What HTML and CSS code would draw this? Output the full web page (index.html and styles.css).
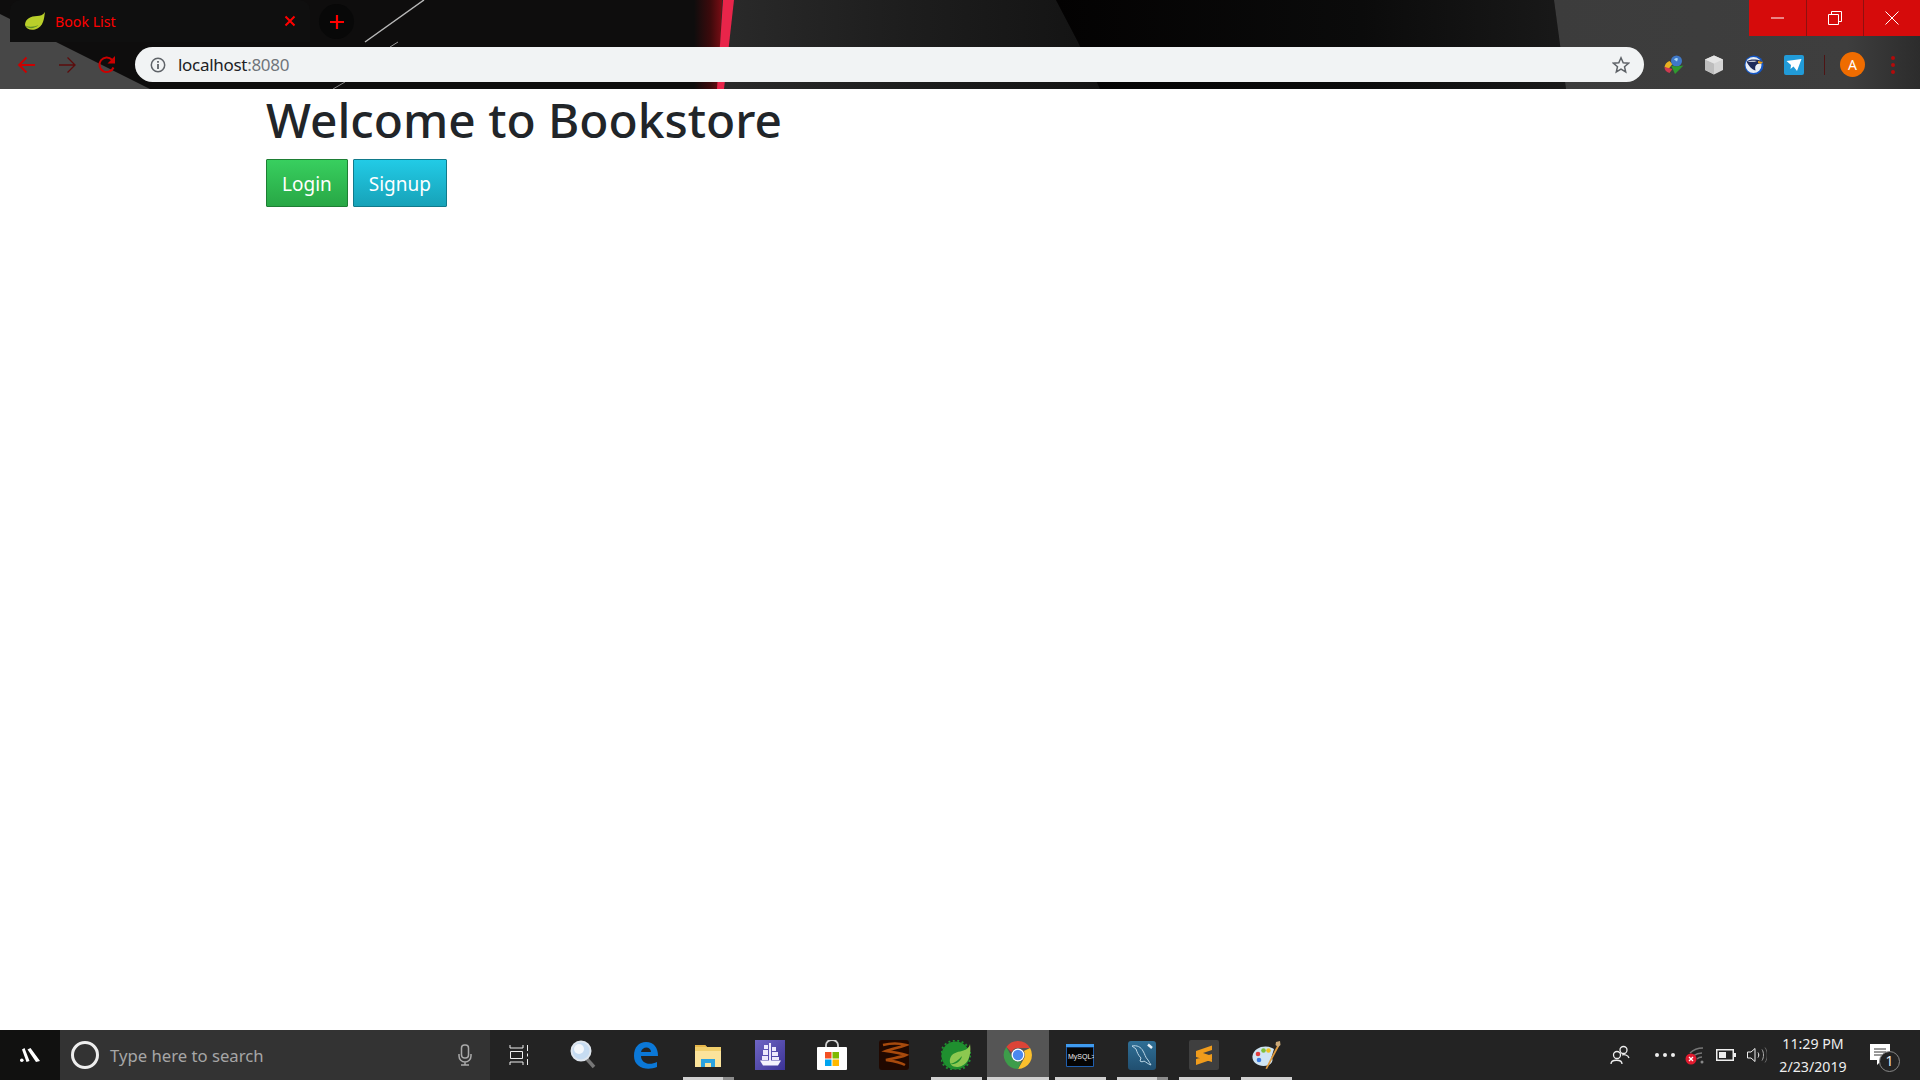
FILE: index.html
```html
<!DOCTYPE html>
<html lang="en">
<head>
    <meta charset="UTF-8">
    <meta name="viewport" content="width=device-width, initial-scale=1.0">
    <title>Book List</title>
    <link rel="stylesheet" href="styles.css">
</head>
<body>
    <header class="frame">
        <!-- browser theme wallpaper -->
        <svg class="theme" width="1920" height="89" viewBox="0 0 1920 89">
            <defs>
                <linearGradient id="glow" x1="0" x2="1" y1="0" y2="0">
                    <stop offset="0" stop-color="#0e0d0d"/>
                    <stop offset="0.6" stop-color="#3e0a0c"/>
                    <stop offset="1" stop-color="#7a0d14"/>
                </linearGradient>
                <linearGradient id="fade" x1="0" x2="1" y1="0" y2="0">
                    <stop offset="0" stop-color="#2a2a2a"/>
                    <stop offset="0.5" stop-color="#1d1d1d"/>
                    <stop offset="1" stop-color="#131313"/>
                </linearGradient>
                <linearGradient id="fade2" x1="0" x2="1" y1="0" y2="0">
                    <stop offset="0" stop-color="#030202"/>
                    <stop offset="0.6" stop-color="#0b0b0b"/>
                    <stop offset="1" stop-color="#191919"/>
                </linearGradient>
                <linearGradient id="side" x1="0" x2="1" y1="0" y2="0">
                    <stop offset="0" stop-color="#3c3c3c"/>
                    <stop offset="0.8" stop-color="#3e3e3e"/>
                    <stop offset="1" stop-color="#2c2c2c"/>
                </linearGradient>
                <linearGradient id="shipBg" x1="0" x2="1" y1="0" y2="1">
                    <stop offset="0" stop-color="#6f66c4"/>
                    <stop offset="1" stop-color="#3c3396"/>
                </linearGradient>
                <linearGradient id="dbBg" x1="0" x2="0" y1="0" y2="1">
                    <stop offset="0" stop-color="#2f6f96"/>
                    <stop offset="1" stop-color="#214f70"/>
                </linearGradient>
            </defs>
            <rect width="1920" height="89" fill="#0e0d0d"/>
            <polygon points="0,14 150,89 0,89" fill="#474747"/>
            <rect x="694" width="28" height="89" fill="url(#glow)"/>
            <polygon points="722,0 1056,0 1078,42 1100,89 718,89" fill="url(#fade)"/>
            <polygon points="1056,0 1554,0 1566,89 1100,89 1078,42" fill="url(#fade2)"/>
            <polygon points="1554,0 1920,0 1920,89 1566,89" fill="url(#side)"/>
            <polygon points="723,0 734,0 724,89 717,89" fill="#e8254a"/>
            <line x1="365" y1="42" x2="424" y2="0" stroke="#b8b8b8" stroke-width="1.5"/>
            <line x1="390" y1="47" x2="398" y2="42" stroke="#999"/>
            <line x1="333" y1="89" x2="345" y2="82" stroke="#888"/>
        </svg>

        <div class="window-controls">
            <div class="win-btn">
                <svg width="14" height="14" viewBox="0 0 14 14"><path d="M0 7h13" stroke="#fff" fill="none"/></svg>
            </div>
            <div class="win-btn">
                <svg width="14" height="14" viewBox="0 0 14 14"><path d="M.5 3.5h10v10H.5zM3.5 3.5V.5h10v10h-3" stroke="#fff" fill="none"/></svg>
            </div>
            <div class="win-btn">
                <svg width="14" height="14" viewBox="0 0 14 14"><path d="M.5.5l13 13M13.500.5l-13 13" stroke="#fff" fill="none"/></svg>
            </div>
        </div>

        <div class="tabstrip">
            <div class="tab">
                <svg class="favicon" width="22" height="20" viewBox="0 0 22 20">
                    <path d="M21 1C20 7 20 16 11 18.500 6 19.500 2 18 1 14 1 8 7 5 13 5c3 0 6-1 8-4z" fill="#b9cf2a"/>
                    <path d="M1.500 15c3 3 9 3 13-1-4 2-9 2-13 1z" fill="#5f8f2a"/>
                </svg>
                <span class="tab-title">Book List</span>
                <svg class="tab-close" width="12" height="12" viewBox="0 0 12 12"><path d="M1.500 1.500l9 9M10.500 1.500l-9 9" stroke="#f00" stroke-width="2" fill="none"/></svg>
            </div>
            <div class="new-tab">
                <svg width="16" height="16" viewBox="0 0 16 16"><path d="M8 1v14M1 8h14" stroke="#f00" stroke-width="2.200" fill="none"/></svg>
            </div>
        </div>

        <div class="toolbar">
            <div class="nav-buttons">
                <svg width="20" height="18" viewBox="0 0 20 18"><path d="M18 9H2M9.500 1.500L2 9l7.500 7.500" stroke="#cc0000" stroke-width="1.800" fill="none"/></svg>
                <svg width="20" height="18" viewBox="0 0 20 18"><path d="M2 9h16M10.500 1.500L18 9l-7.500 7.500" stroke="#5c0c0c" stroke-width="1.300" fill="none"/></svg>
                <svg width="20" height="20" viewBox="0 0 20 20"><path d="M16.500 12.500a7.300 7.300 0 1 1-1.500-7.800" stroke="#cc0000" stroke-width="2" fill="none"/><path d="M18 1v7.500h-7.500z" fill="#cc0000"/></svg>
            </div>
            <div class="omnibox">
                <svg class="info-icon" width="16" height="16" viewBox="0 0 16 16"><circle cx="8" cy="8" r="6.700" stroke="#5f6368" stroke-width="1.500" fill="none"/><path d="M7.100 7h1.800v5H7.100zM7.100 4h1.800v1.800H7.100z" fill="#5f6368"/></svg>
                <span class="url">localhost<span class="url-port">:8080</span></span>
                <svg class="star" width="18" height="18" viewBox="0 0 18 18"><path d="M9 1.800l2.200 4.900 5.300.5-4 3.500 1.200 5.200L9 13.200l-4.700 2.700 1.200-5.200-4-3.500 5.300-.5z" stroke="#5f6368" stroke-width="1.500" fill="none"/></svg>
            </div>
            <div class="extensions">
                <svg width="20" height="20" viewBox="0 0 20 20">
                    <path d="M.5 12a8 8 0 0 1 5-6l3 3-4 5z" fill="#e8b020"/>
                    <path d="M.5 12c0 3 1.500 5 5 6l3-4-4-1z" fill="#d03a50"/>
                    <circle cx="12.500" cy="6" r="5.500" fill="#3f78c8"/>
                    <path d="M10 4.500a3 3 0 0 1 4-1l-1 3z" fill="#a8d8f4"/>
                    <path d="M7 10.500l5 1 7.500-1L11 19z" fill="#2f9a2f"/>
                </svg>
                <svg width="20" height="20" viewBox="0 0 20 20">
                    <path d="M10 .5l9 4v10.500l-9 4.500-9-4.500V4.500z" fill="#d4d4d4"/>
                    <path d="M1 4.500l9 4v11l-9-4.500z" fill="#bdbdbd"/>
                    <path d="M1 4.500l9-4 9 4-9 4z" fill="#e4e4e4"/>
                </svg>
                <svg width="20" height="20" viewBox="0 0 20 20">
                    <circle cx="10" cy="10" r="9.500" fill="#1456c4"/>
                    <circle cx="9.500" cy="10" r="8" fill="#e8eef6"/>
                    <path d="M2.500 6.500c4-2.500 9-2.500 15-.5l1 2-5 1c-2 1-3 3-2 6.500-4-1-7-5-9-9z" fill="#1d2a5a"/>
                    <path d="M14 6l5 1-2 2-3-1z" fill="#e8a020"/>
                    <path d="M3 6.500c3-1 6-1 10-.5-3 1-6 1-10 .5z" fill="#f4f6fa"/>
                </svg>
                <svg width="20" height="20" viewBox="0 0 20 20">
                    <rect width="20" height="20" rx="2" fill="#219bd8"/>
                    <path d="M2.500 6l15-2-4.500 12-3.500-4.500-3 2.500.5-4z" fill="#fff"/>
                </svg>
            </div>
            <div class="toolbar-sep"></div>
            <div class="avatar">A</div>
            <div class="menu-dots"><span></span><span></span><span></span></div>
        </div>
    </header>

    <main class="page">
        <h1>Welcome to Bookstore</h1>
        <div class="actions">
            <a class="btn btn-login">Login</a>
            <a class="btn btn-signup">Signup</a>
        </div>
    </main>

    <footer class="taskbar">
        <div class="start">
            <svg width="20" height="14" viewBox="0 0 20 14"><circle cx="1.800" cy="12.200" r="1.800" fill="#fff"/><path d="M2 1.500L4.500 0l5 13-3 1zM7.500 1.500L10.500 0 20 13l-4 1z" fill="#fff"/></svg>
        </div>
        <div class="search">
            <span class="cortana"></span>
            <span class="search-text">Type here to search</span>
            <svg class="mic" width="14" height="22" viewBox="0 0 14 22"><rect x="3.500" y="1" width="7" height="13" rx="3" stroke="#aaa" stroke-width="1.500" fill="none"/><path d="M1 10v2a6 6 0 0 0 12 0v-2M7 18v3M3 21h8" stroke="#aaa" stroke-width="1.500" fill="none"/></svg>
        </div>
        <div class="apps">
            <div class="app app-taskview">
                <svg width="22" height="22" viewBox="0 0 22 22"><path d="M1 1v3h13V1M1 21v-3h13v3M1.500 7.500h12v7h-12zM18.500 1v6M18.500 9.500v3M18.500 15v6" stroke="#eee" fill="none"/></svg>
            </div>
            <div class="app">
                <svg width="30" height="30" viewBox="0 0 30 30"><path d="M17 18l8 9" stroke="#777" stroke-width="3.500"/><circle cx="12" cy="11" r="9.500" fill="#c6dcf2" stroke="#dfe6ee" stroke-width="2"/><circle cx="10" cy="9" r="5" fill="#f4f8fc"/></svg>
            </div>
            <div class="app">
                <svg width="26" height="28" viewBox="0 0 26 28"><path d="M25 15H8c0 7 8 10 16 6v5c-10 4-23 1-23-11C1 6 6 1 13 1c8 0 12 6 12 14zM8 11h10c0-6-9-6-10 0z" fill="#0b78d7"/></svg>
            </div>
            <div class="app app-open app-stacked">
                <svg width="28" height="26" viewBox="0 0 28 26"><path d="M1 3h10l2 2h14v20H1z" fill="#f1cf6c"/><path d="M1 3h10l2 2H1z" fill="#e6b64a"/><rect x="1" y="9" width="26" height="16" fill="#fbe39b"/><path d="M7 25v-8h14v8h-4v-4h-6v4z" fill="#2aa3e0"/></svg>
            </div>
            <div class="app">
                <svg width="30" height="30" viewBox="0 0 30 30">
                    <rect width="30" height="30" fill="url(#shipBg)"/>
                    <path d="M14 3h2v18h-2zM9 5h4v4H9zM8 10h5v5H8zM7 16h6v4H7zM17 7h4v4h-4zM17 12h6v4h-6zM17 17h7v3h-7z" fill="#ece9fb"/>
                    <path d="M5 20.500h21l-3 5H8z" fill="#f4f2fd"/>
                </svg>
            </div>
            <div class="app">
                <svg width="30" height="30" viewBox="0 0 30 30"><path d="M9 9V5a6 5 0 0 1 12 0v4" stroke="#cfcfcf" stroke-width="1.800" fill="none"/><rect y="7" width="30" height="23" rx="1" fill="#fff"/><rect x="8" y="12" width="6.500" height="6.500" fill="#f25022"/><rect x="15.500" y="12" width="6.500" height="6.500" fill="#7fba00"/><rect x="8" y="19.500" width="6.500" height="6.500" fill="#00a4ef"/><rect x="15.500" y="19.500" width="6.500" height="6.500" fill="#ffb900"/></svg>
            </div>
            <div class="app">
                <svg width="30" height="30" viewBox="0 0 30 30"><rect width="30" height="30" rx="3" fill="#200800"/><path d="M4 5c8-2 16-2 23 0C19 8 12 9 7 11c7 1 14 2 20 4-7 3-14 3-20 5 7 1 14 2 19 5" stroke="#a84a0c" stroke-width="2.500" fill="none"/></svg>
            </div>
            <div class="app app-open">
                <svg width="30" height="30" viewBox="0 0 30 30">
                    <circle cx="14.500" cy="15.500" r="14" fill="#1f8f2f"/>
                    <circle cx="14.500" cy="15.500" r="15" fill="none" stroke="#1f8f2f" stroke-width="2" stroke-dasharray="2 2.500"/>
                    <path d="M29 4c1.500 10-1 21-12 23-6 .5-9-3-8-8 1.500-6 7-7 12-8 4-1 7-3 8-7z" fill="#8cc850"/>
                    <path d="M9 24c4-1 9-4 12-8-1 5-6 9-12 8z" fill="#1f8f2f"/>
                </svg>
            </div>
            <div class="app app-active">
                <svg width="30" height="30" viewBox="0 0 30 30">
                    <path d="M15 1a14 14 0 0 1 12.100 7H15a7 7 0 0 0-6.500 4.300L3.300 7A14 14 0 0 1 15 1z" fill="#db4437"/>
                    <path d="M27.100 8A14 14 0 0 1 15 29l6-10.500A7 7 0 0 0 20.800 11z" fill="#fbc02d"/>
                    <path d="M15 29A14 14 0 0 1 3.300 7l6 10.500A7 7 0 0 0 18.500 21z" fill="#3d9c4a"/>
                    <circle cx="15" cy="15" r="6.500" fill="#fff"/>
                    <circle cx="15" cy="15" r="5.200" fill="#4a88ee"/>
                </svg>
            </div>
            <div class="app app-open">
                <svg width="28" height="23" viewBox="0 0 28 23"><rect width="28" height="23" rx="1" fill="#1f5fb0"/><rect width="28" height="3" fill="#3f9bf0"/><rect x="1" y="3.500" width="26" height="18.500" fill="#050505"/><text x="2" y="14.500" class="mysql-text">MySQL&gt;</text></svg>
            </div>
            <div class="app app-open app-stacked">
                <svg width="28" height="29" viewBox="0 0 28 29"><rect width="28" height="29" rx="3" fill="url(#dbBg)"/><path d="M4 5c5-1 9 1 11 5 2 3 2 6 5 9 1 2 2 3 3 5-3-1-5-3-7-4-1 1-3 1-4 0l1-3c-3-3-4-6-5-9-1-1-3-2-4-3z" fill="none" stroke="#bcd6e6"/><path d="M20 3.500l4 3.500" stroke="#eaf2f7" stroke-width="2.500"/></svg>
            </div>
            <div class="app app-open">
                <svg width="30" height="30" viewBox="0 0 30 30"><rect width="30" height="30" rx="2" fill="#3f3f3f"/><path d="M23 5.500L7 11v6l16 5v-6l-9-3 9-3zM7 25l16-5.500V14L7 19z" fill="#f09c1c"/></svg>
            </div>
            <div class="app app-open">
                <svg width="29" height="29" viewBox="0 0 29 29"><path d="M22 8C14 3 2 6 .5 15c-1 8 9 12 16 9 4-2 5-5 3-8z" fill="#cfe4f2"/><circle cx="6" cy="13" r="2.300" fill="#e23c3c"/><circle cx="11.500" cy="9.500" r="2.300" fill="#7fbf3a"/><circle cx="16.500" cy="9.500" r="2.300" fill="#f0c020"/><circle cx="7" cy="19" r="2.300" fill="#3a7ae0"/><path d="M26 3l1.500 1.500L15 28l-1.500-.5z" fill="#e09a3c"/><path d="M24 1l4-1 .5 4-2.500 2-2.500-2z" fill="#c9a878"/></svg>
            </div>
        </div>
        <div class="tray">
            <svg class="tray-people" width="20" height="20" viewBox="0 0 20 20"><circle cx="7" cy="10" r="3.500" stroke="#eee" stroke-width="1.300" fill="none"/><circle cx="13.500" cy="5" r="3.500" stroke="#eee" stroke-width="1.300" fill="none"/><path d="M1 19c0-5 11-5 11 0M12 10c2-1 6 0 7 3" stroke="#eee" stroke-width="1.300" fill="none"/></svg>
            <div class="tray-dots"><span></span><span></span><span></span></div>
            <svg class="tray-wifi" width="20" height="20" viewBox="0 0 20 20"><path d="M5 8c4-4 9-5 13-5M8 11c3-2 6-3 9-3M12 14c1-1 3-2 5-2" stroke="#777" stroke-width="1.300" fill="none"/><circle cx="17" cy="17" r="1.500" fill="#888"/><circle cx="6" cy="14" r="5.500" fill="#e01b2f"/><path d="M4 12l4 4M8 12l-4 4" stroke="#fff" stroke-width="1.300"/></svg>
            <svg class="tray-battery" width="20" height="12" viewBox="0 0 20 12"><rect x=".75" y=".75" width="16.500" height="10.500" stroke="#eee" stroke-width="1.500" fill="none"/><rect x="3" y="3" width="7" height="6" fill="#eee"/><rect x="18" y="4" width="2" height="4" fill="#eee"/></svg>
            <svg class="tray-volume" width="20" height="16" viewBox="0 0 20 16"><path d="M.5 5h3.500L8 1.500v13L4 11H.500zM11 5.500c1 1.500 1 3.500 0 5" stroke="#eee" fill="none"/><path d="M15 2.500c2 3 2 8 0 11" stroke="#aaa" fill="none"/><path d="M18 .5c3 4 3 11 0 15" stroke="#666" fill="none"/></svg>
            <div class="clock"><span>11:29 PM</span><span>2/23/2019</span></div>
            <div class="notify">
                <svg width="20" height="22" viewBox="0 0 20 22"><path d="M0 0h20v16h-8l-5 5v-5H0z" fill="#fff"/><path d="M4 5h12M4 8h12M4 11h8" stroke="#333"/></svg>
                <span class="notify-badge">1</span>
            </div>
        </div>
    </footer>
</body>
</html>
```

FILE: styles.css
```css
* {
    box-sizing: border-box;
}
body {
    margin: 0;
    height: 100vh;
    display: flex;
    flex-direction: column;
    overflow: hidden;
    background: #fff;
    font-family: "Noto Sans", sans-serif;
}

/* browser frame */
.frame {
    position: relative;
    height: 89px;
    flex-shrink: 0;
    background: #0e0d0d;
}
.theme {
    position: absolute;
    left: 0;
    top: 0;
}
.window-controls {
    position: absolute;
    right: 0;
    top: 0;
    display: flex;
    height: 36px;
}
.win-btn {
    width: 57px;
    display: flex;
    align-items: center;
    justify-content: center;
    background: #d60b0b;
    border-left: 1px solid #8e1010;
}
.win-btn:first-child {
    border-left: none;
}
.tabstrip {
    position: relative;
    height: 42px;
    display: flex;
    align-items: flex-end;
    padding-left: 10px;
}
.tab {
    width: 300px;
    height: 42px;
    padding: 0 14px 0 14px;
    display: flex;
    align-items: center;
    background: #0f0f0f;
    border-radius: 10px 10px 0 0;
}
.favicon {
    margin-right: 9px;
}
.tab-title {
    flex: 1;
    font-size: 14.200px;
    color: #f00;
}
.new-tab {
    width: 35px;
    height: 35px;
    margin: 0 0 3px 9px;
    border-radius: 50%;
    background: #080808;
    display: flex;
    align-items: center;
    justify-content: center;
}
.toolbar {
    position: relative;
    height: 47px;
    display: flex;
    align-items: center;
    padding-bottom: 2px;
}
.nav-buttons {
    width: 135px;
    padding-left: 17px;
    display: flex;
    align-items: center;
    gap: 20px;
}
.omnibox {
    width: 1509px;
    height: 35px;
    border-radius: 18px;
    background: #f1f3f4;
    display: flex;
    align-items: center;
    padding: 0 14px 0 15px;
}
.info-icon {
    margin-right: 12px;
}
.url {
    flex: 1;
    font-size: 17px;
    letter-spacing: -0.3px;
    color: #202124;
}
.url-port {
    color: #70757a;
}
.extensions {
    margin-left: 20px;
    display: flex;
    gap: 20px;
}
.toolbar-sep {
    width: 1px;
    height: 20px;
    margin-left: 20px;
    background: #4e1414;
}
.avatar {
    width: 25px;
    height: 25px;
    margin-left: 15px;
    border-radius: 50%;
    background: #ef6c00;
    color: #fff;
    font-size: 14px;
    text-align: center;
    line-height: 25px;
}
.menu-dots {
    margin-left: 26px;
    display: flex;
    flex-direction: column;
    gap: 3px;
}
.menu-dots span {
    width: 4px;
    height: 4px;
    border-radius: 50%;
    background: #b30b0b;
}

/* page content */
.page {
    flex: 1;
    padding: 1px 0 0 266px;
}
.page h1 {
    margin: 0;
    font-size: 47.800px;
    line-height: 60px;
    font-weight: 500;
    color: #212529;
}
.actions {
    margin-top: 9px;
    display: flex;
    gap: 5px;
}
.btn {
    height: 48px;
    padding: 1px 15px 0;
    display: flex;
    align-items: center;
    font-size: 19px;
    color: #fff;
    border: 1px solid;
    border-radius: 1px;
}
.btn-login {
    background: linear-gradient(#38cf5f, #28a745);
    border-color: #1e7e34;
}
.btn-signup {
    background: linear-gradient(#22cbe6, #17a2b8);
    border-color: #117a8b;
}

/* windows taskbar */
.taskbar {
    height: 50px;
    flex-shrink: 0;
    display: flex;
    background: #232323;
    color: #eee;
}
.start {
    width: 60px;
    display: flex;
    align-items: center;
    justify-content: center;
    background: #111110;
}
.search {
    width: 430px;
    padding: 0 18px 0 11px;
    display: flex;
    align-items: center;
    background: #333;
}
.cortana {
    width: 28px;
    height: 28px;
    border: 3.500px solid #eee;
    border-radius: 50%;
    margin-right: 11px;
}
.search-text {
    flex: 1;
    font-size: 16.700px;
    color: #a6a6a6;
}
.apps {
    display: flex;
    margin-left: 1px;
}
.app {
    position: relative;
    width: 62px;
    display: flex;
    align-items: center;
    justify-content: center;
}
.app-taskview {
    padding-left: 1px;
    padding-right: 5px;
}
.app-open::after {
    content: "";
    position: absolute;
    left: 5.500px;
    right: 5.500px;
    bottom: 0;
    height: 3px;
    background: #d0d0d0;
}
.app-stacked::after {
    background: linear-gradient(90deg, #d0d0d0 78%, #8c8c8c 78%);
}
.app-active {
    background: #555;
}
.app-active::after {
    content: "";
    position: absolute;
    left: 0;
    right: 0;
    bottom: 0;
    height: 3px;
    background: #d0d0d0;
}
.mysql-text {
    font-family: "Liberation Sans", sans-serif;
    font-size: 7px;
    fill: #eee;
}
.tray {
    margin-left: auto;
    display: flex;
    align-items: center;
    padding-right: 30px;
}
.tray-people {
    margin-right: 25px;
}
.tray-dots {
    display: flex;
    gap: 4px;
    margin-right: 10px;
}
.tray-dots span {
    width: 4px;
    height: 4px;
    border-radius: 50%;
    background: #eee;
}
.tray-wifi {
    margin-right: 11px;
}
.tray-battery {
    margin-right: 11px;
}
.clock {
    width: 90px;
    margin: 0 12px 0 1px;
    display: flex;
    flex-direction: column;
    align-items: center;
    font-size: 14.200px;
    line-height: 23px;
}
.notify {
    position: relative;
    width: 20px;
    height: 22px;
}
.notify-badge {
    position: absolute;
    left: 9px;
    top: 7px;
    width: 21px;
    height: 21px;
    border: 1.500px solid #888;
    border-radius: 50%;
    background: #232323;
    font-size: 14px;
    line-height: 18px;
    text-align: center;
}
```
